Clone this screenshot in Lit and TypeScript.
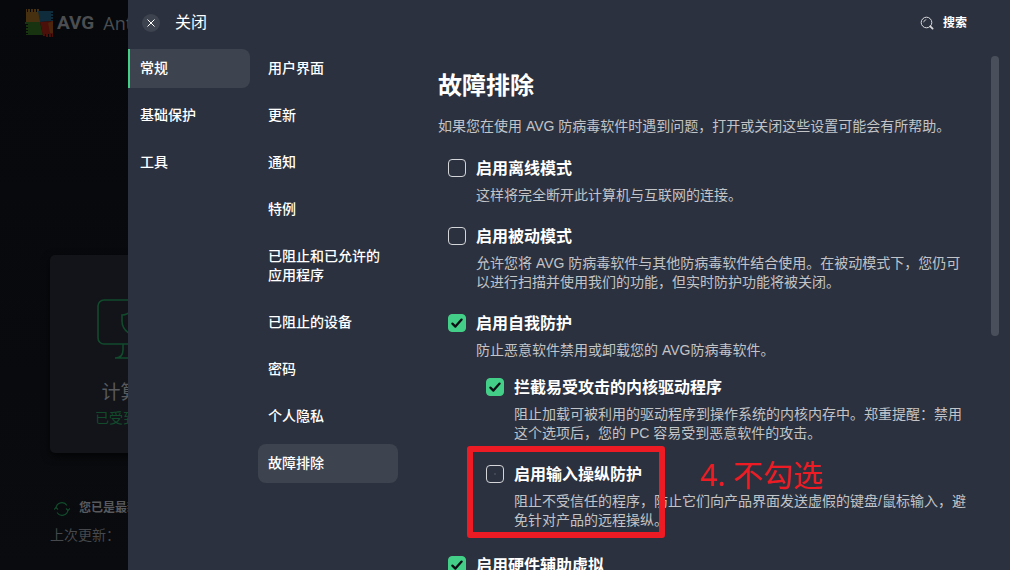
import { LitElement, html, css, svg, nothing } from "lit";
import { customElement, property, state } from "lit/decorators.js";

interface Setting {
  id: string;
  title: string;
  text?: string;
  on: boolean;
  marked?: boolean;
  children?: Setting[];
}

const SECTIONS = ["常规", "基础保护", "工具"];
const PAGES = ["用户界面", "更新", "通知", "特例", "已阻止和已允许的应用程序", "已阻止的设备", "密码", "个人隐私", "故障排除"];

const SETTINGS: Setting[] = [
  { id: "offline", title: "启用离线模式", text: "这样将完全断开此计算机与互联网的连接。", on: false },
  {
    id: "passive",
    title: "启用被动模式",
    text: "允许您将 AVG 防病毒软件与其他防病毒软件结合使用。在被动模式下，您仍可以进行扫描并使用我们的功能，但实时防护功能将被关闭。",
    on: false,
  },
  {
    id: "self",
    title: "启用自我防护",
    text: "防止恶意软件禁用或卸载您的 AVG防病毒软件。",
    on: true,
    children: [
      {
        id: "drivers",
        title: "拦截易受攻击的内核驱动程序",
        text: "阻止加载可被利用的驱动程序到操作系统的内核内存中。郑重提醒：禁用这个选项后，您的 PC 容易受到恶意软件的攻击。",
        on: true,
      },
      {
        id: "input",
        title: "启用输入操纵防护",
        text: "阻止不受信任的程序，防止它们向产品界面发送虚假的键盘/鼠标输入，避免针对产品的远程操纵。",
        on: false,
        marked: true,
      },
    ],
  },
  { id: "hardware", title: "启用硬件辅助虚拟", on: true },
];

@customElement("setting-check")
export class SettingCheck extends LitElement {
  @property({ attribute: false }) setting!: Setting;
  @state() private on = false;

  static styles = css`
    :host {
      display: block;
      position: relative;
    }
    .row {
      display: grid;
      grid-template-columns: 18px 1fr;
      column-gap: 10px;
      row-gap: 6px;
      align-items: start;
    }
    .mark {
      display: grid;
      width: 18px;
      height: 18px;
      margin-top: 2px;
    }
    .mark > * {
      grid-area: 1 / 1;
    }
    .box {
      appearance: none;
      box-sizing: border-box;
      width: 18px;
      height: 18px;
      margin: 0;
      border: 1px solid #d3d5d8;
      border-radius: 4px;
    }
    .box:checked {
      background: #44cf88;
      border-color: #44cf88;
    }
    .tick {
      width: 18px;
      height: 18px;
      pointer-events: none;
    }
    .title {
      font-size: 16px;
      line-height: 23px;
      font-weight: 700;
      color: #fff;
    }
    .text {
      grid-column: 2;
      margin: 0;
      font-size: 14px;
      line-height: 19px;
      color: #c2c4c8;
    }
    .frame {
      position: absolute;
      left: -19px;
      top: -17px;
      box-sizing: border-box;
      width: 198px;
      height: 92px;
      border: 6px solid #ed1c24;
      border-radius: 3px;
      pointer-events: none;
    }
    .note {
      position: absolute;
      left: 214px;
      top: -8px;
      font-size: 30px;
      line-height: 40px;
      font-family: "Noto Sans", "Noto Sans CJK SC", sans-serif;
      font-weight: 400;
      color: #ed1c24;
      white-space: nowrap;
      pointer-events: none;
    }
  `;

  willUpdate(changed: Map<string, unknown>) {
    if (changed.has("setting")) this.on = this.setting.on;
  }

  render() {
    const s = this.setting;
    return html`
      <div class="row">
        <span class="mark">
          <input
            class="box"
            type="checkbox"
            id=${s.id}
            .checked=${this.on}
            @change=${(e: Event) => (this.on = (e.target as HTMLInputElement).checked)}
          />
          ${this.on
            ? html`<svg class="tick" viewBox="0 0 18 18" aria-hidden="true">
                <path d="M4.4 9.6 7.4 12.6 13.6 5.6" fill="none" stroke="#0c0f14" stroke-width="2.3" stroke-linecap="round" stroke-linejoin="round" />
              </svg>`
            : s.marked
              ? html`<svg class="tick" viewBox="0 0 18 18" aria-hidden="true">
                  <circle cx="9" cy="9" r="1" fill="#4a505b" />
                </svg>`
              : nothing}
        </span>
        <label class="title" for=${s.id}>${s.title}</label>
        ${s.text ? html`<p class="text">${s.text}</p>` : nothing}
      </div>
      ${s.marked ? html`<span class="frame"></span><span class="note">4. 不勾选</span>` : nothing}
    `;
  }
}

@customElement("app-root")
export class AppRoot extends LitElement {
  @state() private section = 0;
  @state() private page = 8;

  static styles = css`
    :host {
      display: grid;
      grid-template-columns: 128px minmax(0, 1fr);
      height: 100vh;
      overflow: hidden;
      background: #07090c;
      font-family: "Liberation Sans", "Noto Sans CJK SC", sans-serif;
      font-size: 14px;
      line-height: 19px;
      color: #fff;
    }
    .behind {
      display: flex;
      flex-direction: column;
      overflow: hidden;
      white-space: nowrap;
      background: linear-gradient(#06080c, #090b0e);
    }
    .brand {
      display: flex;
      align-items: center;
      padding: 8px 0 0 25px;
      height: 30px;
    }
    .logo {
      flex: none;
      width: 30px;
      height: 30px;
    }
    .name {
      margin-left: 2px;
      font: 700 19px/30px Roboto, sans-serif;
      color: #4b4d50;
    }
    .product {
      margin-left: 9px;
      font: 400 18px/30px "Open Sans", sans-serif;
      color: #4b4d50;
    }
    .card {
      display: flex;
      flex-direction: column;
      align-items: center;
      box-sizing: border-box;
      width: 160px;
      height: 198px;
      margin: 217px 0 0 50px;
      padding-top: 43px;
      border-radius: 5px;
      background: #121419;
      box-shadow: 0 3px 8px #000a;
    }
    .screen {
      width: 66px;
      height: 64px;
    }
    .device {
      margin-top: 18px;
      font-size: 19px;
      line-height: 26px;
      color: #57595d;
    }
    .state {
      margin-top: 2px;
      line-height: 20px;
      color: #124a2c;
    }
    .status {
      display: flex;
      align-items: center;
      gap: 9px;
      margin: 46px 0 0 54px;
      font-size: 12px;
      font-weight: 700;
      color: #57595d;
    }
    .sync {
      flex: none;
      width: 16px;
      height: 16px;
    }
    .last {
      margin: 8px 0 0 50px;
      color: #46484c;
    }
    .panel {
      display: flex;
      flex-direction: column;
      min-height: 0;
      background: #2b313e;
    }
    .top {
      display: flex;
      align-items: center;
      justify-content: space-between;
      height: 46px;
      padding: 0 43px 0 14px;
    }
    .close,
    .search,
    .item {
      border: 0;
      background: none;
      padding: 0;
      font: inherit;
      color: inherit;
      text-align: left;
      cursor: pointer;
    }
    .close {
      display: flex;
      align-items: center;
      gap: 15px;
      font-size: 16px;
      line-height: 24px;
    }
    .round {
      width: 18px;
      height: 18px;
    }
    .search {
      display: flex;
      align-items: center;
      gap: 9px;
      font-size: 12px;
      font-weight: 700;
    }
    .lens {
      width: 14px;
      height: 14px;
    }
    .body {
      flex: 1;
      display: grid;
      grid-template-columns: 122px 140px minmax(0, 1fr) 8px;
      min-height: 0;
      padding-right: 11px;
    }
    .nav {
      display: flex;
      flex-direction: column;
      gap: 8px;
      padding-top: 3px;
    }
    .pages {
      margin-left: 8px;
      width: 140px;
    }
    .item {
      padding: 10px;
      border-radius: 8px;
      font-weight: 500;
    }
    .sections .item {
      border-left: 2px solid transparent;
      border-radius: 0 8px 8px 0;
    }
    .item.on {
      background: #3e444f;
    }
    .sections .item.on {
      border-left-color: #44cf88;
    }
    .content {
      overflow: hidden;
      padding: 24px 21px 0 48px;
    }
    .heading {
      margin: 0;
      font-size: 24px;
      line-height: 32px;
      font-weight: 700;
    }
    .intro {
      margin: 15px 0 21px;
      color: #c2c4c8;
    }
    .list {
      display: flex;
      flex-direction: column;
      gap: 20px;
      padding-left: 10px;
    }
    .sub {
      margin: 16px 0 4px;
      padding-left: 38px;
    }
    .thumb {
      height: 280px;
      margin-top: 10px;
      border-radius: 4px;
      background: #4a505b;
    }
  `;

  private group(items: Setting[], cls: string): unknown {
    return html`<div class=${cls}>
      ${items.map(
        (s) => html`<div>
          <setting-check .setting=${s}></setting-check>
          ${s.children ? this.group(s.children, "list sub") : nothing}
        </div>`
      )}
    </div>`;
  }

  private logo() {
    return svg`
      <path d="M1 2 1 1 2 1 2 4 3 4 3 1 5 1 5 4 6 4 6 1 8 1 8 4 9 4 9 1 11 1 11 4 12 4 12 1 14 1 14 4 16 14 1 15Z" fill="#46300f"/>
      <path d="M13 3 28 3 28 5 26 5 26 6 28 6 28 8 26 8 26 9 28 9 28 11 26 11 26 12 28 12 28 13 15 14Z" fill="#0e2c3c"/>
      <path d="M0 14 15 14 18 27 1 27 1 26 3 26 3 25 1 25 1 23 3 23 3 22 1 22 1 20 3 20 3 19 1 19 1 17 3 17 3 16 0 16Z" fill="#17330f"/>
      <path d="M15 14 28 13 28 29 27 29 27 26 26 26 26 29 24 29 24 26 23 26 23 29 21 29 21 26 20 26 20 28 18 28Z" fill="#4a1009"/>
      <path d="M23 15 28 13 28 25 25 25Z" fill="#4d240c"/>`;
  }

  render() {
    return html`
      <aside class="behind" aria-hidden="true">
        <div class="brand">
          <svg class="logo" viewBox="0 0 30 30">${this.logo()}</svg>
          <span class="name">AVG</span>
          <span class="product">AntiVirus</span>
        </div>
        <div class="card">
          <svg class="screen" viewBox="0 0 66 64" fill="none" stroke="#124a2c" stroke-width="1.6">
            <rect x="1" y="2" width="64" height="44" rx="6" />
            <path d="M33 14 Q29 17 25 17 V23 Q25 31 33 36 Q41 31 41 23 V17 Q37 17 33 14Z" />
            <path d="M26 46 V52 Q26 60 18 60 H48 Q40 60 40 52 V46" />
          </svg>
          <span class="device">计算机</span>
          <span class="state">已受到保护</span>
        </div>
        <div class="status">
          <svg class="sync" viewBox="0 0 16 16" fill="none" stroke="#124a2c" stroke-width="1.2">
            <path d="M2 7 A6 6 0 0 1 13 4.500 M14 9 A6 6 0 0 1 3 11.500" />
            <path d="M0 8.500 2 6.500 4 8.500 M12 7.500 14 9.500 16 7.500" />
          </svg>
          <span>您已是最新版本</span>
        </div>
        <div class="last">上次更新：</div>
      </aside>
      <main class="panel">
        <header class="top">
          <button class="close">
            <svg class="round" viewBox="0 0 18 18" aria-hidden="true">
              <circle cx="9" cy="9" r="9" fill="#3e444f" />
              <path d="M5.500 5.500 12.500 12.500 M12.500 5.500 5.500 12.500" stroke="#fff" stroke-width="1" />
            </svg>
            关闭
          </button>
          <button class="search">
            <svg class="lens" viewBox="0 0 14 14" fill="none" stroke="#d8dadd" aria-hidden="true">
              <circle cx="6.500" cy="6.500" r="5.300" />
              <path d="M3.700 6.300 A2.800 2.800 0 0 1 6.300 3.700" stroke-width=".8" />
              <path d="M10.300 10.300 12.600 12.600" stroke-width="1.800" stroke-linecap="round" />
            </svg>
            搜索
          </button>
        </header>
        <div class="body">
          <nav class="nav sections">
            ${SECTIONS.map(
              (t, i) => html`<button class="item ${i === this.section ? "on" : ""}" @click=${() => (this.section = i)}>${t}</button>`
            )}
          </nav>
          <nav class="nav pages">
            ${PAGES.map(
              (t, i) => html`<button class="item ${i === this.page ? "on" : ""}" @click=${() => (this.page = i)}>${t}</button>`
            )}
          </nav>
          <section class="content">
            <h1 class="heading">故障排除</h1>
            <p class="intro">如果您在使用 AVG 防病毒软件时遇到问题，打开或关闭这些设置可能会有所帮助。</p>
            ${this.group(SETTINGS, "list")}
          </section>
          <div class="thumb"></div>
        </div>
      </main>
    `;
  }
}
